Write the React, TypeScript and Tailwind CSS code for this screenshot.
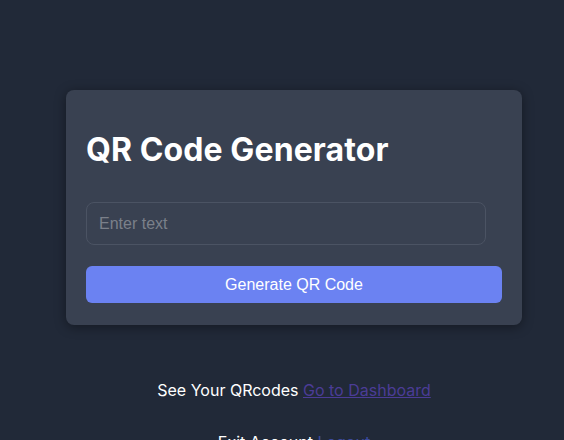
export default function App() {
  return (
    <div className="min-h-screen w-full bg-[#212938] font-['Inter',sans-serif] pt-[90px]">
      <div className="ml-[66px] w-[456px]">
        <div className="rounded-lg bg-[#394151] px-5 pt-[40px] pb-[22px] shadow-[0_2px_12px_rgba(0,0,0,0.4)]">
          <h1 className="text-[32px] leading-10 font-bold tracking-[0.1px] text-white">QR Code Generator</h1>
          <input
            type="text"
            placeholder="Enter text"
            className="mt-[32px] block h-[43px] w-[400px] rounded-lg border border-[#4b5363] bg-transparent px-3 font-['Liberation_Sans',Arial,sans-serif] text-base text-white placeholder:text-[#7b808a] outline-none"
          />
          <button className="mt-[21px] block h-[37px] w-full rounded-md bg-[#6b82f2] font-['Liberation_Sans',Arial,sans-serif] text-base text-white">
            Generate QR Code
          </button>
        </div>
        <p className="mt-[53px] text-center text-base leading-6 text-white">
          See Your QRcodes{' '}
          <a href="#" className="text-[#4b3c96] underline">Go to Dashboard</a>
        </p>
        <p className="mt-[28px] text-center text-base leading-6 text-white">
          Exit Account{' '}
          <a href="#" className="text-[#3b4a9e]">Logout</a>
        </p>
      </div>
    </div>
  );
}
